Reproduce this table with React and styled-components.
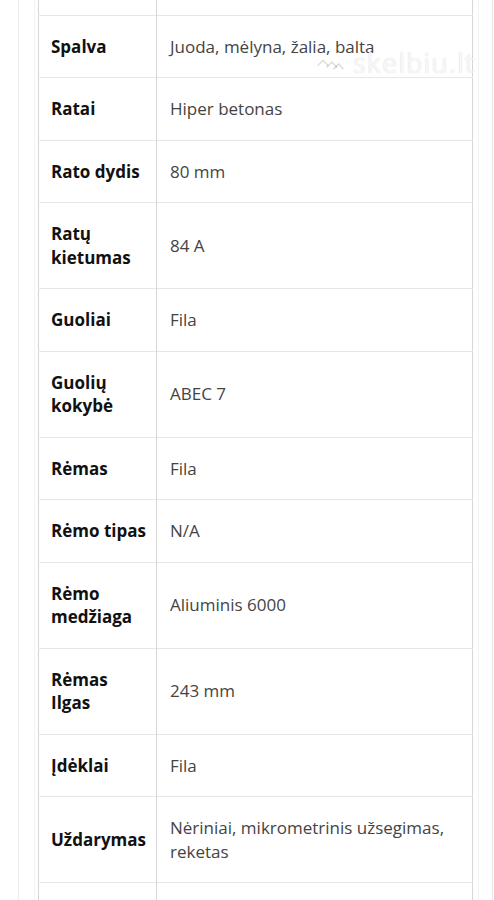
import React from 'react'
import styled, { createGlobalStyle } from 'styled-components'

const GlobalStyle = createGlobalStyle`
  html, body {
    margin: 0;
    padding: 0;
    background: #fff;
    overflow: hidden;
  }
  body {
    font-family: 'Open Sans', 'Noto Sans', 'DejaVu Sans', sans-serif;
  }
`

const Page = styled.div`
  width: 494px;
  height: 900px;
  overflow: hidden;
  padding: 0 1px 0 18px;
  box-sizing: border-box;
  position: relative;
`

const Card = styled.div`
  display: flow-root;
  border-left: 1px solid #ededed;
  border-right: 1px solid #ededed;
  padding: 0 13px 0 15px;
  height: 100%;
`

const Inner = styled.div`
  display: flow-root;
  border-left: 1px solid #f3f3f3;
  border-right: 1px solid #f3f3f3;
  padding: 0 5px 0 3px;
  height: 100%;
`

const Table = styled.table`
  width: 435px;
  table-layout: fixed;
  border-collapse: collapse;
  margin-top: -47px;
  border-left: 1px solid #d6d6d6;
  border-right: 1px solid #d6d6d6;
`

const Row = styled.tr`
  border-bottom: 1px solid #e6e6e6;
`

const LabelCol = styled.col`
  width: 118px;
`

const Label = styled.td`
  padding: 19px 8px 19px 12px;
  font-size: 17px;
  line-height: 23.5px;
  font-weight: 700;
  color: #111;
  vertical-align: middle;
  border-right: 1px solid #d6d6d6;
`

const Value = styled.td`
  padding: 19px 13px;
  font-size: 17px;
  line-height: 23.5px;
  color: #444;
  vertical-align: middle;
`

const Watermark = styled.div`
  position: absolute;
  left: 315px;
  top: 44px;
  display: flex;
  align-items: center;
  gap: 8px;
  font-family: 'Open Sans', sans-serif;
  font-size: 27px;
  letter-spacing: 1px;
  color: rgba(255, 255, 255, 0.85);
  text-shadow: 0 0 1px rgba(0, 0, 0, 0.2);
  pointer-events: none;
`

const rows = [
  ['Dydis', ''],
  ['Spalva', 'Juoda, mėlyna, žalia, balta'],
  ['Ratai', 'Hiper betonas'],
  ['Rato dydis', '80 mm'],
  ['Ratų kietumas', '84 A'],
  ['Guoliai', 'Fila'],
  ['Guolių kokybė', 'ABEC 7'],
  ['Rėmas', 'Fila'],
  ['Rėmo tipas', 'N/A'],
  ['Rėmo medžiaga', 'Aliuminis 6000'],
  ['Rėmas Ilgas', '243 mm'],
  ['Įdėklai', 'Fila'],
  ['Uždarymas', 'Nėriniai, mikrometrinis užsegimas, reketas'],
  ['Svoris', ''],
]

const App = () => {
  return (
    <>
      <GlobalStyle />
      <Page>
        <Card>
          <Inner>
            <Table>
              <colgroup>
                <LabelCol />
                <col />
              </colgroup>
              <tbody>
                {rows.map(([k, v], i) => (
                  <Row key={i}>
                    <Label>{k}</Label>
                    <Value>{v}</Value>
                  </Row>
                ))}
              </tbody>
            </Table>
          </Inner>
        </Card>
        <Watermark>
          <svg width="30" height="20" viewBox="0 0 34 22">
            <g fill="none" stroke="rgba(0,0,0,0.16)" strokeWidth="1.5">
              <path d="M3 14 L9 8 L15 14" />
              <path d="M13 16 L19 10 L25 16" />
              <path d="M21 18 L27 12 L32 18" />
            </g>
          </svg>
          <span>skelbiu.lt</span>
        </Watermark>
      </Page>
    </>
  )
}

export default App
